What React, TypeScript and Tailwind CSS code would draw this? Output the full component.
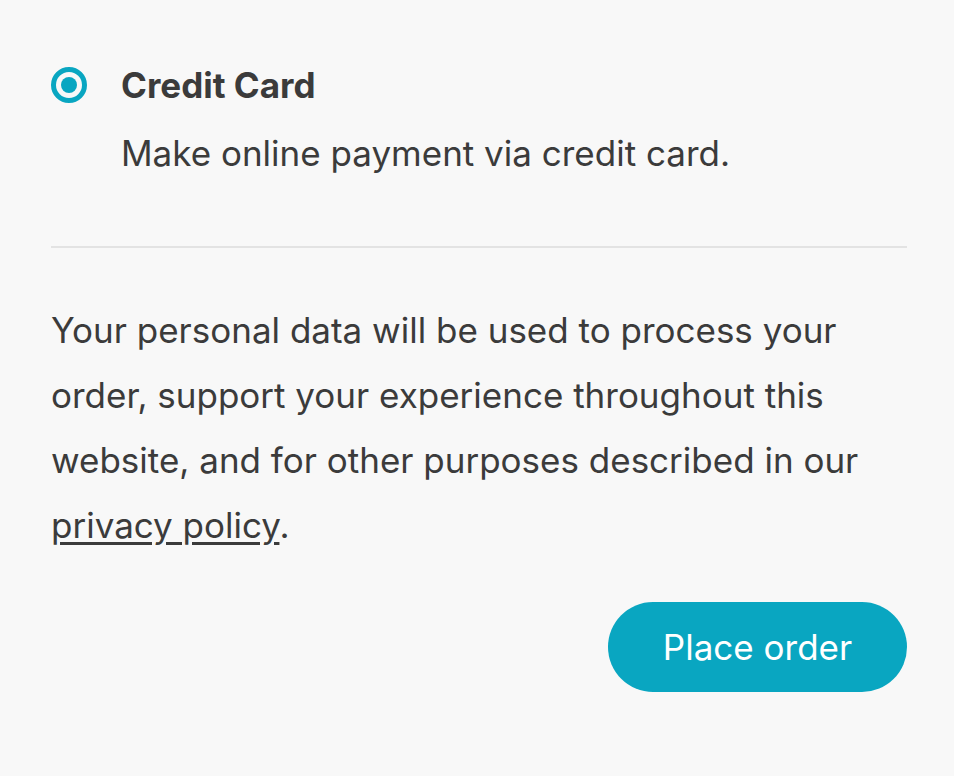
import React from 'react';

export default function App() {
  return (
    <div className="min-h-screen bg-[#f8f8f8] pl-[51px] pr-[47px] pt-[64px] text-[#3b3b3b] font-['Inter',sans-serif]">
      {/* Payment method */}
      <label className="flex items-center gap-[34px]">
        <span className="flex h-[36px] w-[36px] items-center justify-center rounded-full border-[5px] border-[#09a6c1]">
          <span className="h-[16px] w-[16px] rounded-full bg-[#09a6c1]" />
        </span>
        <span className="text-[35px] font-bold leading-[42px]">Credit Card</span>
      </label>
      <p className="mt-[24px] pl-[70px] text-[35px] leading-[46px]">Make online payment via credit card.</p>

      <div className="mt-[70px] border-t-2 border-[#e3e3e3]" />

      {/* Privacy */}
      <p className="mt-[50px] text-[35px] leading-[65px]">
        Your personal data will be used to process your order, support your experience throughout this
        website, and for other purposes described in our{' '}
        <a href="#" className="underline underline-offset-4">
          privacy policy
        </a>
        .
      </p>

      <div className="mt-[44px] flex justify-end">
        <button className="h-[90px] w-[299px] rounded-full bg-[#09a6c1] text-[35px] text-white">
          Place order
        </button>
      </div>
    </div>
  );
}
